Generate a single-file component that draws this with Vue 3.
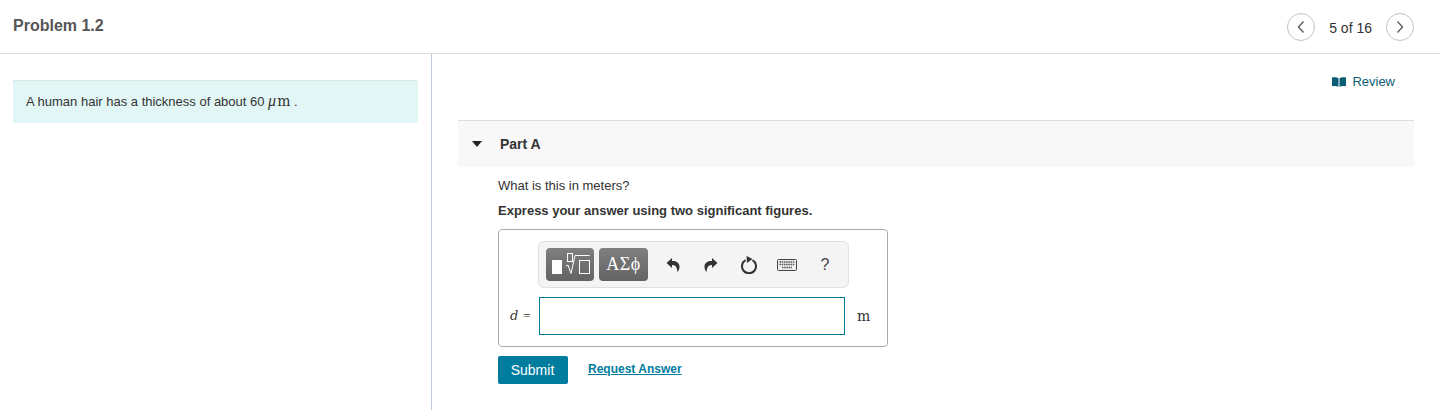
<template>
  <div class="page">
    <header class="top-bar">
      <h1 class="title">Problem 1.2</h1>
      <nav class="pager">
        <button class="round-btn" aria-label="Previous">
          <svg width="10" height="14" viewBox="0 0 10 14"><path d="M7.5 1.5 2.5 7l5 5.5" /></svg>
        </button>
        <span class="count">5 of 16</span>
        <button class="round-btn" aria-label="Next">
          <svg width="10" height="14" viewBox="0 0 10 14"><path d="M2.5 1.5 7.5 7l-5 5.5" /></svg>
        </button>
      </nav>
    </header>

    <div class="columns">
      <aside class="left-pane">
        <div class="intro">
          A human hair has a thickness of about 60 <span class="math"><i>μ</i>m</span> .
        </div>
      </aside>

      <main class="right-pane">
        <div class="review-row">
          <a class="review">
            <svg width="14" height="10" viewBox="0 0 14 10">
              <path d="M0 .5C2.500 0 5 .3 6.500 1.200V9.800C5 9 2.500 8.800 0 9.300zM14 .5C11.500 0 9 .3 7.500 1.200V9.800C9 9 11.500 8.800 14 9.300z" fill="#0b5c75" />
            </svg>
            Review
          </a>
        </div>

        <section class="part">
          <div class="part-head">
            <span class="caret"></span>
            <span class="part-name">Part A</span>
          </div>
          <div class="part-body">
            <p class="question">What is this in meters?</p>
            <p class="instruction">Express your answer using two significant figures.</p>

            <div class="answer-box">
              <div class="toolbar">
                <button class="tool-btn templates" aria-label="Templates">
                  <svg width="48" height="33" viewBox="0 0 48 33">
                    <rect x="6" y="12" width="10" height="14" fill="#fff" />
                    <g fill="none" stroke="#fff" stroke-width="1">
                      <rect x="21.500" y="5.500" width="5" height="8" />
                      <path d="M20 18l2-1 3 8.500L29 7.500h14.500" />
                      <rect x="33.500" y="12.500" width="10" height="13" />
                    </g>
                  </svg>
                </button>
                <button class="tool-btn symbols">ΑΣϕ</button>
                <div class="tool-icons">
                  <span class="tool-slot">
                    <svg width="14" height="16" viewBox="0 0 14 16">
                      <path d="M6 1 .5 6 6 11V8c3 0 5 1.200 5.500 7C13 13.500 13.500 11.500 13.500 9.500 13.500 6 10.500 4 6 4z" fill="#333" />
                    </svg>
                  </span>
                  <span class="tool-slot">
                    <svg width="14" height="16" viewBox="0 0 14 16">
                      <path d="M8 1l5.500 5L8 11V8c-3 0-5 1.200-5.500 7C1 13.500.5 11.500.5 9.500.5 6 3.500 4 8 4z" fill="#333" />
                    </svg>
                  </span>
                  <span class="tool-slot">
                    <svg width="18" height="19" viewBox="0 0 18 19">
                      <path d="M5.500 5.200a7 7 0 1 0 7 0" fill="none" stroke="#333" stroke-width="2" />
                      <path d="M6.500 1 12.500 4 7 8z" fill="#333" />
                    </svg>
                  </span>
                  <span class="tool-slot">
                    <svg width="20" height="12" viewBox="0 0 20 12">
                      <rect x=".5" y=".5" width="19" height="11" rx="1" fill="#eee" stroke="#444" />
                      <path d="M2.500 3h15M2.500 5.500h15M5 8.500h10" stroke="#555" stroke-width="1.500" stroke-dasharray="1.500 .7" />
                    </svg>
                  </span>
                  <span class="tool-slot help">?</span>
                </div>
              </div>

              <div class="input-row">
                <span class="var"><i>d</i><span class="eq">=</span></span>
                <input class="answer-input" type="text" />
                <span class="unit">m</span>
              </div>
            </div>

            <div class="actions">
              <button class="submit">Submit</button>
              <a class="request">Request Answer</a>
            </div>
          </div>
        </section>
      </main>
    </div>
  </div>
</template>

<script setup>
</script>

<style>
body {
  background: #fff;
}
</style>

<style scoped>
.page {
  width: 1440px;
  height: 410px;
  overflow: hidden;
  font-family: "Liberation Sans", Arial, sans-serif;
  color: #333;
  font-size: 13px;
}

.top-bar {
  height: 53px;
  border-bottom: 1px solid #dedede;
  display: flex;
  align-items: center;
  justify-content: space-between;
  padding: 0 26px 0 13px;
}

.title {
  margin: 0 0 2px;
  font-size: 16px;
  font-weight: bold;
  color: #555;
}

.pager {
  display: flex;
  align-items: center;
  gap: 14px;
  margin-top: 1px;
}

.round-btn {
  width: 28px;
  height: 28px;
  padding: 0;
  border: 1px solid #c4c4c4;
  border-radius: 50%;
  background: #fff;
  display: flex;
  align-items: center;
  justify-content: center;
}

.round-btn path {
  fill: none;
  stroke: #666;
  stroke-width: 1.5;
}

.count {
  font-size: 14px;
  color: #333;
  padding-top: 2px;
}

.columns {
  display: flex;
  height: 356px;
}

.left-pane {
  width: 405px;
  border-right: 1px solid #bfcad9;
  padding: 26px 13px 0;
}

.intro {
  height: 42px;
  line-height: 40px;
  background: #e2f7f5;
  border-top: 1px solid #dde6e6;
  padding-left: 13px;
  font-size: 13px;
}

.math {
  font-family: "DejaVu Serif", serif;
  font-size: 14px;
}

.math i {
  font-family: "Liberation Serif", serif;
  font-size: 16px;
  margin-right: 1px;
}

.right-pane {
  flex: 1;
  padding: 0 26px;
}

.review-row {
  display: flex;
  justify-content: flex-end;
  padding: 20px 19px 0 0;
  height: 46px;
  box-sizing: border-box;
}

.review {
  color: #0b5c75;
  font-size: 13px;
  display: flex;
  align-items: center;
  gap: 6px;
  height: 15px;
}

.part {
  margin-top: 20px;
  border-top: 1px solid #dedede;
}

.part-head {
  height: 46px;
  background: #f8f8f8;
  display: flex;
  align-items: center;
  padding-left: 14px;
  gap: 18px;
}

.caret {
  width: 0;
  height: 0;
  border-left: 5.5px solid transparent;
  border-right: 5.5px solid transparent;
  border-top: 6px solid #222;
}

.part-name {
  font-size: 14px;
  font-weight: bold;
  color: #333;
}

.part-body {
  padding: 11px 0 0 40px;
}

.question {
  margin: 0;
  line-height: 16px;
  font-size: 13px;
}

.instruction {
  margin: 9px 0 0;
  line-height: 16px;
  font-size: 13px;
  font-weight: bold;
}

.answer-box {
  width: 388px;
  height: 116px;
  margin-top: 10px;
  border: 1px solid #ababab;
  border-radius: 4px;
}

.toolbar {
  width: 302px;
  height: 45px;
  margin: 11px 0 0 39px;
  border: 1px solid #e0e0e0;
  border-radius: 6px;
  background: #f4f4f4;
  display: flex;
  align-items: center;
  padding-left: 7px;
  gap: 5px;
}

.tool-btn {
  height: 33px;
  padding: 0;
  border: none;
  border-radius: 4px;
  background: linear-gradient(#7f7f7f, #636363);
  color: #fff;
  display: flex;
  align-items: center;
  justify-content: center;
}

.templates {
  width: 48px;
}

.symbols {
  width: 49px;
  font-family: "Liberation Serif", serif;
  font-size: 18px;
  letter-spacing: 0.5px;
}

.tool-icons {
  flex: 1;
  display: flex;
  align-items: center;
  padding-left: 1px;
}

.tool-slot {
  width: 38px;
  display: flex;
  align-items: center;
  justify-content: center;
}

.help {
  font-size: 16px;
  color: #444;
}

.input-row {
  display: flex;
  align-items: center;
  margin-top: 9px;
}

.var {
  width: 40px;
  padding-left: 11px;
  box-sizing: border-box;
  font-family: "DejaVu Serif", serif;
  font-size: 13px;
}

.eq {
  margin-left: 5px;
  font-family: "Liberation Serif", serif;
}

.answer-input {
  width: 306px;
  height: 38px;
  box-sizing: border-box;
  border: 1px solid #007a99;
  background: #fff;
  outline: none;
  padding: 0;
}

.unit {
  margin-left: 12px;
  font-family: "DejaVu Serif", serif;
  font-size: 14px;
}

.actions {
  display: flex;
  align-items: center;
  margin-top: 9px;
  gap: 20px;
}

.submit {
  width: 70px;
  height: 28px;
  border: none;
  border-radius: 2px;
  background: #007c9e;
  color: #fff;
  font-family: "Liberation Sans", Arial, sans-serif;
  font-size: 14px;
  font-weight: normal;
  padding: 0 1px 0 0;
}

.request {
  color: #007c9e;
  font-size: 12px;
  font-weight: bold;
  text-decoration: underline;
  margin-bottom: 2px;
}
</style>
